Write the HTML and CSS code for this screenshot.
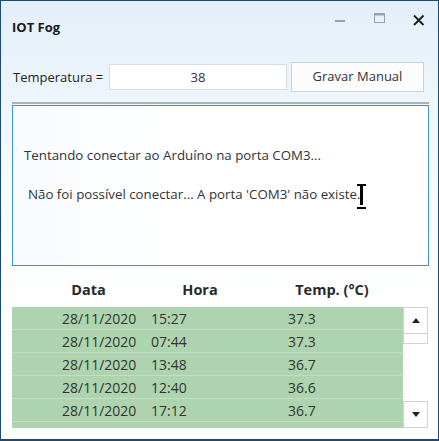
FILE: index.html
```html
<!DOCTYPE html>
<html lang="pt">
<head>
<meta charset="utf-8">
<title>IOT Fog</title>
<link rel="stylesheet" href="styles.css">
</head>
<body>
<div class="window">
  <div class="titlebar">
    <span class="title">IOT Fog</span>
    <div class="controls">
      <span class="ctl"><svg width="12" height="12" viewBox="0 0 12 12"><rect x="0" y="8" width="10" height="2" fill="#9aa3ab"/></svg></span>
      <span class="ctl"><svg width="12" height="12" viewBox="0 0 12 12"><rect x="0.5" y="1.5" width="10" height="9" fill="none" stroke="#9aa3ab" stroke-width="1"/><rect x="0.5" y="1.5" width="10" height="2" fill="#9aa3ab"/></svg></span>
      <span class="ctl"><svg width="12" height="14" viewBox="0 0 12 14"><path d="M1 3.5 L10.5 13 M10.5 3.5 L1 13" stroke="#1b1b1b" stroke-width="1.8"/></svg></span>
    </div>
  </div>
  <div class="content">
    <div class="input-row">
      <span class="label">Temperatura =</span>
      <div class="textbox">38</div>
      <div class="button">Gravar Manual</div>
    </div>
    <div class="log-wrap">
      <div class="log">
        <div class="line1">Tentando conectar ao Arduíno na porta COM3...</div>
        <div class="line2">Não foi possível conectar... A porta 'COM3' não existe.<span class="ibeam"></span></div>
      </div>
    </div>
    <div class="grid">
      <div class="grid-head">
        <span class="h-data">Data</span>
        <span class="h-hora">Hora</span>
        <span class="h-temp">Temp. (°C)</span>
      </div>
      <div class="grid-body">
        <div class="rows">
          <div class="row"><span class="c-data">28/11/2020</span><span class="c-hora">15:27</span><span class="c-temp">37.3</span></div>
          <div class="row"><span class="c-data">28/11/2020</span><span class="c-hora">07:44</span><span class="c-temp">37.3</span></div>
          <div class="row"><span class="c-data">28/11/2020</span><span class="c-hora">13:48</span><span class="c-temp">36.7</span></div>
          <div class="row"><span class="c-data">28/11/2020</span><span class="c-hora">12:40</span><span class="c-temp">36.6</span></div>
          <div class="row"><span class="c-data">28/11/2020</span><span class="c-hora">17:12</span><span class="c-temp">36.7</span></div>
          <div class="row"><span class="c-data">28/11/2020</span><span class="c-hora">13:15</span><span class="c-temp">36.4</span></div>
        </div>
        <div class="scrollbar">
          <div class="sb-btn"><span class="arrow-up"></span></div>
          <div class="sb-thumb"></div>
          <div class="sb-track"></div>
          <div class="sb-btn"><span class="arrow-down"></span></div>
        </div>
      </div>
    </div>
  </div>
</div>
</body>
</html>
```
FILE: styles.css
```css
* { box-sizing: border-box; }
html, body {
  margin: 0;
  padding: 0;
  width: 439px;
  height: 441px;
  overflow: hidden;
  background: #ffffff;
}
body {
  font-family: "Open Sans", "Noto Sans", sans-serif;
  color: #333333;
}
.window {
  width: 439px;
  height: 441px;
  border: 1px solid #1d4a72;
  border-bottom-width: 2px;
  background: linear-gradient(to bottom, #e3eff9 0px, #edf5fc 90px, #f7fbfe 200px, #ffffff 300px);
  display: flex;
  flex-direction: column;
}
.titlebar {
  height: 49px;
  display: flex;
  align-items: flex-start;
  justify-content: space-between;
}
.title {
  font-weight: 700;
  font-size: 13px;
  color: #1a1a1a;
  margin: 17px 0 0 11px;
}
.controls {
  display: flex;
  gap: 27px;
  margin: 11px 13px 0 0;
}
.ctl {
  width: 12px;
  height: 14px;
  display: block;
}
.ctl svg { display: block; }
.content {
  padding: 12px 10px 0 11px;
  display: flex;
  flex-direction: column;
}
.input-row {
  display: flex;
  align-items: center;
  height: 30px;
}
.label {
  font-size: 13px;
  color: #222;
  margin-left: 1px;
  width: 96px;
}
.textbox {
  width: 178px;
  height: 26px;
  border: 1px solid #d6dde3;
  background: #ffffff;
  font-size: 13px;
  text-align: center;
  line-height: 24px;
  color: #333;
}
.button {
  margin-left: 4px;
  width: 133px;
  height: 30px;
  border: 1px solid #cfd3d7;
  background: #fcfcfc;
  font-size: 13px;
  color: #333;
  text-align: center;
  line-height: 26px;
}
.log-wrap {
  margin-top: 10px;
  border-top: 2px solid #a8b3bc;
  padding-top: 1px;
  width: 417px;
}
.log {
  height: 161px;
  border: 1px solid #3e94c6;
  background: linear-gradient(to right, #f8fbfe, #ffffff 40%, #ffffff);
  padding: 40px 0 0 11px;
  font-size: 13.3px;
  line-height: 19px;
  color: #333;
}
.line2 {
  margin-top: 19px;
  padding-left: 4px;
}
.ibeam {
  display: inline-block;
  position: relative;
  width: 8px;
  height: 21px;
  vertical-align: -6px;
  margin-left: -3px;
}
.ibeam::before {
  content: "";
  position: absolute;
  left: 3px;
  top: 0;
  width: 3px;
  height: 21px;
  background: #000;
}
.ibeam::after {
  content: "";
  position: absolute;
  left: 0;
  top: 0;
  width: 9px;
  height: 21px;
  border-top: 2px solid #000;
  border-bottom: 2px solid #000;
}
.grid {
  margin-top: 9px;
  width: 417px;
}
.grid-head {
  display: flex;
  height: 32px;
  padding-bottom: 4px;
  align-items: center;
  font-weight: 700;
  font-size: 14.5px;
  color: #2a2a2a;
}
.h-data { width: 153px; text-align: center; }
.h-hora { width: 70px; text-align: center; }
.h-temp { width: 194px; text-align: center; }
.grid-body {
  display: flex;
  height: 121px;
}
.rows {
  width: 391px;
  height: 121px;
  overflow: hidden;
}
.row {
  height: 23px;
  background: #add4ae;
  border-bottom: 1px solid #c7dcc7;
  display: flex;
  align-items: center;
  padding-left: 50px;
  font-size: 14px;
  color: #333;
}
.c-data { width: 89px; }
.c-hora { width: 137px; }
.scrollbar {
  width: 25px;
  display: flex;
  flex-direction: column;
}
.sb-btn {
  height: 27px;
  border: 1px solid #d2d2d2;
  background: #ffffff;
  display: flex;
  align-items: center;
  justify-content: center;
}
.sb-thumb {
  height: 10px;
  border: 1px solid #d2d2d2;
  border-top: 0;
  background: #ffffff;
}
.sb-track { flex: 1; }
.arrow-up {
  width: 0;
  height: 0;
  border-left: 4px solid transparent;
  border-right: 4px solid transparent;
  border-bottom: 5px solid #222;
}
.arrow-down {
  width: 0;
  height: 0;
  border-left: 4px solid transparent;
  border-right: 4px solid transparent;
  border-top: 5px solid #222;
}
```
